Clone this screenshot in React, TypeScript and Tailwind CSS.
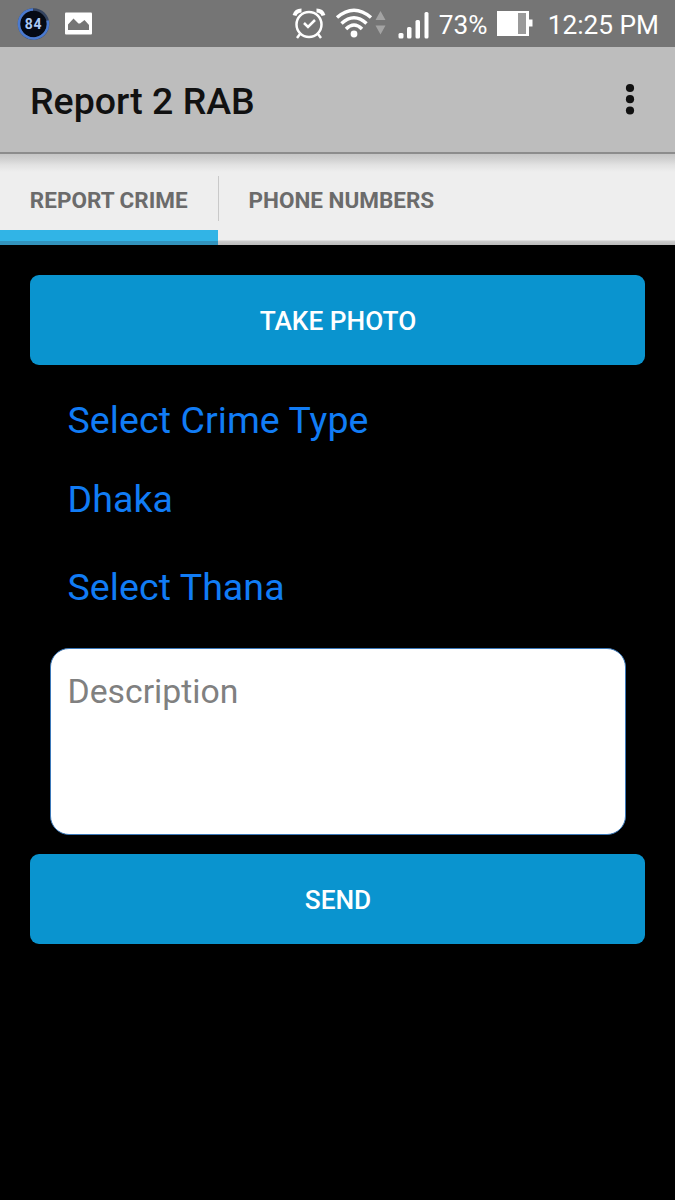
import { Fragment, useState } from "react";

const TABS = ["REPORT CRIME", "PHONE NUMBERS"];

function StatusBar() {
  return (
    <div className="flex h-[47px] items-center justify-between bg-[#757575] pl-[16px] pr-[15px] text-white">
      <div className="flex items-center gap-[14px]">
        <svg width="34" height="34" viewBox="0 0 34 34">
          <circle cx="17.5" cy="17" r="14.5" fill="#050a14" stroke="#35445f" strokeWidth="2.5" />
          <path d="M31.5 13.5A14.5 14.5 0 1 1 17 2.5" fill="none" stroke="#4a7ad0" strokeWidth="2.5" />
          <text
            x="17.5"
            y="21.8"
            textAnchor="middle"
            fill="#a9c8f5"
            className="font-[Roboto,sans-serif] text-[14px] font-bold tracking-[0.6px]"
          >
            84
          </text>
        </svg>
        <svg width="28" height="24" viewBox="0 0 28 24">
          <rect x="1" y="0.5" width="27" height="22" rx="1" fill="#fff" />
          <path d="M4 18v-5.500L9.500 6.500l5 5H16l4.500-3.500 4.500 5v5z" fill="#757575" />
        </svg>
      </div>

      <div className="flex items-center">
        <svg width="138" height="47" viewBox="292 0 138 47" fill="none" stroke="#fff">
          <circle cx="309" cy="24.5" r="12.5" strokeWidth="2.5" />
          <path d="M304 23l4 4 7-7" strokeWidth="2.5" />
          <path d="M300 34l-3 4M318 34l3 4" strokeWidth="2.5" />
          <path d="M294.5 15.5Q296 10.5 301.5 10.5M323.500 15.500Q322 10.5 316.500 10.5" strokeWidth="4" />
          <g strokeWidth="3.5">
            <path d="M337 17.5Q354 3 371 17.5" />
            <path d="M341.5 23.5Q354 12 366.5 23.5" />
            <path d="M346 29Q354 21 362 29" />
          </g>
          <circle cx="354" cy="34" r="3.4" fill="#fff" stroke="none" />
          <path d="M375.500 20l5-9 5 9zM375.500 25.500l5 9 5-9z" fill="#a3a3a3" stroke="none" />
          <g fill="#fff" stroke="none">
            <rect x="398.500" y="33" width="5" height="5.5" rx="1.5" />
            <rect x="407" y="27" width="4.5" height="11.5" rx="1.5" />
            <rect x="415.5" y="20" width="4.5" height="18.5" rx="1.5" />
            <rect x="424.5" y="12" width="4" height="26.5" rx="1.5" />
          </g>
        </svg>
        <span className="ml-[9px] w-[58px] whitespace-nowrap pt-[3px] text-[26.25px] leading-[30px]">73%</span>
        <svg width="36" height="25" viewBox="0 0 36 25">
          <path d="M0 0h32v8.5h3.5v7H32V25H0z" fill="#fff" />
          <rect x="21" y="2" width="8" height="21" fill="#9a9a9a" />
        </svg>
        <span className="ml-[15px] mr-[1px] whitespace-nowrap pt-[3px] text-[26.25px] leading-[30px]">12:25 PM</span>
      </div>
    </div>
  );
}

function ActionButton({ children }: { children: string }) {
  return (
    <button
      type="button"
      className="block h-[90px] w-full rounded-[9px] bg-[#0a94cf] pl-px pt-[3px] text-[26.25px] font-medium text-white"
    >
      {children}
    </button>
  );
}

export default function App() {
  const [tab, setTab] = useState(0);

  return (
    <main className="flex h-[1200px] w-[675px] flex-col bg-black font-[Roboto,sans-serif]">
      <StatusBar />

      <header className="flex h-[107px] items-center justify-between border-b-2 border-[#8c8c8c] bg-[#bdbdbd] pl-[30px] pr-[40px]">
        <h1 className="pt-[2px] text-[37.5px] font-medium leading-[44px] text-[#111]">Report 2 RAB</h1>
        <button type="button" aria-label="More options" className="pb-[2px]">
          <svg width="10" height="32" viewBox="0 0 10 32" fill="#111">
            <circle cx="5" cy="5" r="4.1" />
            <circle cx="5" cy="16.2" r="4.1" />
            <circle cx="5" cy="27.5" r="4.1" />
          </svg>
        </button>
      </header>

      <nav className="flex h-[91px] bg-[linear-gradient(to_bottom,#c5c5c5_0,#d0d0d0_5px,#e2e2e2_11px,#eee_18px,#eee_86px,#ccc_87px,#bbb_100%)]">
        {TABS.map((label, i) => (
          <Fragment key={label}>
            {i > 0 && <div className="mt-[22px] h-[45px] w-px bg-[#c9c9c9]" />}
            <button
              type="button"
              onClick={() => setTab(i)}
              className={`flex h-full flex-col pl-[29.5px] pr-[30px] text-[22.5px] font-bold text-[#6b6b6b] ${
                tab === i
                  ? "w-[218px] bg-[linear-gradient(to_bottom,transparent_76px,#31b4e6_76px,#31b4e6_87px,#3293bd_87px)]"
                  : ""
              }`}
            >
              <span className="whitespace-nowrap pt-[33px] leading-[27px]">{label}</span>
            </button>
          </Fragment>
        ))}
      </nav>

      <form className="px-[30px] pt-[30px]" onSubmit={(e) => e.preventDefault()}>
        <ActionButton>TAKE PHOTO</ActionButton>

        <div className="flex flex-col items-start pl-[37.5px] pt-[33px] text-[37.5px] leading-[44px] tracking-[0.08px] text-[#117cf5]">
          <button type="button">Select Crime Type</button>
          <button type="button" className="mt-[35px]">Dhaka</button>
          <button type="button" className="mt-[44px]">Select Thana</button>
        </div>

        <div className="px-[19.5px] pb-[19px] pt-[39px]">
          <textarea
            placeholder="Description"
            className="block h-[187px] w-full resize-none rounded-[19px] border border-[#3b78b8] bg-white px-[17px] pt-[23px] text-[33.75px] leading-[40px] outline-none placeholder:text-[#808080]"
          />
        </div>

        <ActionButton>SEND</ActionButton>
      </form>
    </main>
  );
}
